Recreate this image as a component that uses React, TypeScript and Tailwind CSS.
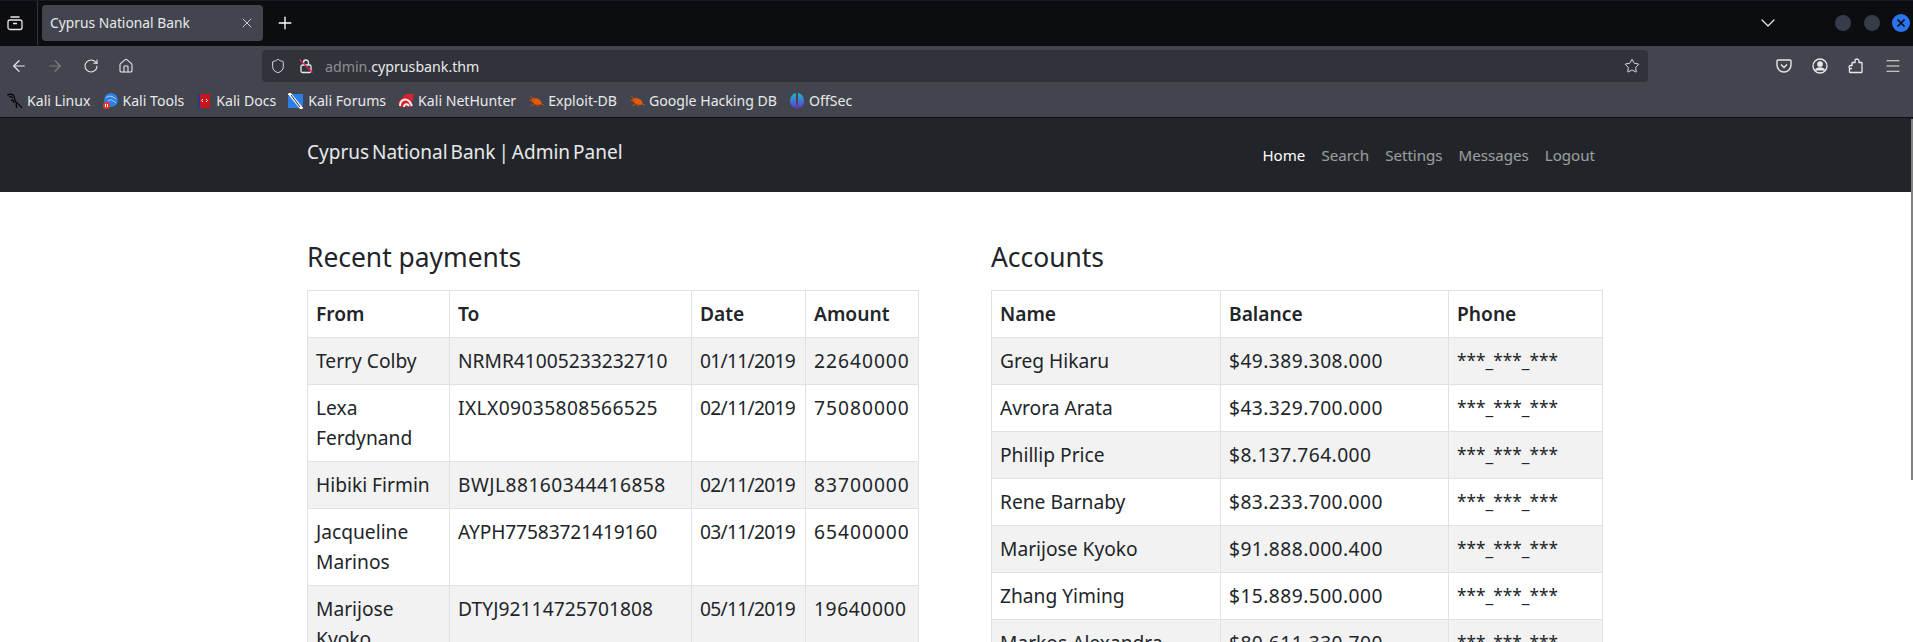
import { ArrowLeft, ArrowRight, ChevronDown, Home, Menu, Plus, RotateCw, Shield, Star, X } from 'lucide-react';

const bookmarks = [
    { name: 'Kali Linux', icon: 'linux' },
    { name: 'Kali Tools', icon: 'tools' },
    { name: 'Kali Docs', icon: 'docs' },
    { name: 'Kali Forums', icon: 'forums' },
    { name: 'Kali NetHunter', icon: 'nethunter' },
    { name: 'Exploit-DB', icon: 'bug' },
    { name: 'Google Hacking DB', icon: 'bug' },
    { name: 'OffSec', icon: 'offsec' },
];

// tracking 补偿字体数字宽度差异
const payments = [
    { from: 'Terry Colby', to: 'NRMR41005233232710', toClass: '', date: '01/11/2019', amount: '22640000', amountClass: 'tracking-[1px]' },
    { from: 'Lexa Ferdynand', to: 'IXLX09035808566525', toClass: 'tracking-[0.4px]', date: '02/11/2019', amount: '75080000', amountClass: 'tracking-[1px]' },
    { from: 'Hibiki Firmin', to: 'BWJL88160344416858', toClass: 'tracking-[0.47px]', date: '02/11/2019', amount: '83700000', amountClass: 'tracking-[1px]' },
    { from: 'Jacqueline Marinos', to: 'AYPH77583721419160', toClass: 'tracking-[-0.13px]', date: '03/11/2019', amount: '65400000', amountClass: 'tracking-[1px]' },
    { from: 'Marijose Kyoko', to: 'DTYJ92114725701808', toClass: 'tracking-[0.07px]', date: '05/11/2019', amount: '19640000', amountClass: 'tracking-[0.6px]' },
];

const accounts = [
    { name: 'Greg Hikaru', balance: '$49.389.308.000' },
    { name: 'Avrora Arata', balance: '$43.329.700.000' },
    { name: 'Phillip Price', balance: '$8.137.764.000' },
    { name: 'Rene Barnaby', balance: '$83.233.700.000' },
    { name: 'Marijose Kyoko', balance: '$91.888.000.400' },
    { name: 'Zhang Yiming', balance: '$15.889.500.000' },
    { name: 'Markos Alexandra', balance: '$80.611.330.700' },
];

function Favicon({ type }: { type: string }) {
    if (type === 'linux') {
        return (
            <svg viewBox="0 0 16 16" className="w-4 h-4" fill="none" stroke="#08080a" strokeWidth="1.3">
                <path d="M0 2c3-1 6-1 7 1 1 3 0 5 3 7 2 1 3 3 5 5" />
                <path d="M2 4c2-1 3 0 4 1M4 7c2 0 3 1 3 3M10 10c-1 1-1 3 0 5" />
            </svg>
        );
    }
    if (type === 'tools') {
        return (
            <svg viewBox="0 0 16 16" className="w-4 h-4">
                <circle cx="9" cy="7" r="7" fill="#2f7fe0" />
                <path d="M4 5c3-3 6-2 10 1M6 8c2-2 5-1 8 2" stroke="#bcd9f7" fill="none" />
                <rect x="1" y="9" width="7" height="7" rx="3" fill="#e5372c" />
                <path d="M3.5 11v3M5.5 11v3" stroke="#fff" />
            </svg>
        );
    }
    if (type === 'docs') {
        return (
            <svg viewBox="0 0 16 16" className="w-4 h-4">
                <rect x="2" y="1" width="12" height="14" fill="#c8141c" />
                <rect x="2" y="1" width="2" height="15" fill="#1d3f8f" />
                <path d="M7 6 5.5 7.5 7 9M10 6l1.5 1.5L10 9" stroke="#fff" fill="none" />
            </svg>
        );
    }
    if (type === 'forums') {
        return (
            <svg viewBox="0 0 16 16" className="w-4 h-4">
                <path d="M0 3 4 1h11v11l-2 3H0z" fill="#2b7fe6" />
                <path d="M1 0 14 16" stroke="#fff" strokeWidth="3" />
                <path d="M3 2 12 14" stroke="#1b2430" strokeWidth="1" />
            </svg>
        );
    }
    if (type === 'nethunter') {
        return (
            <svg viewBox="0 0 16 16" className="w-4 h-4">
                <path d="M0 9 8 1h8l-3 13H2z" fill="#d8232f" />
                <path d="M2 13c0-6 5-8 9-5 1 1 2 3 3 5M6 14c0-3 3-4 5-1" stroke="#f2f2f2" strokeWidth="1.9" fill="none" />
            </svg>
        );
    }
    if (type === 'bug') {
        return (
            <svg viewBox="0 0 16 16" className="w-4 h-4">
                <ellipse cx="8.5" cy="8.5" rx="5.5" ry="3" fill="#e8590c" transform="rotate(25 8.5 8.5)" />
                <path d="M2 3 7 7M1 7l5 2M3 13l4-2M9 14l1-3M13 11l3 1" stroke="#c9480a" />
            </svg>
        );
    }
    return (
        <svg viewBox="0 0 16 16" className="w-4 h-4">
            <defs>
                <linearGradient id="offsec" x1="0" y1="0" x2="0" y2="1">
                    <stop offset="0" stopColor="#1fb6c9" />
                    <stop offset="1" stopColor="#5a3fd8" />
                </linearGradient>
            </defs>
            <path d="M7 0C3 1 1 4 1 8s2 6 6 7z" fill="url(#offsec)" />
            <path d="M9 0c4 1 6 4 6 8s-2 6-6 7z" fill="url(#offsec)" />
            <path d="M8 10v6" stroke="#7a3fd0" />
        </svg>
    );
}

export default function App() {
    return (
        <div className="relative h-[642px] w-[1913px] overflow-hidden bg-white font-['Noto_Sans','Open_Sans',sans-serif]">
            {/* 标签栏 */}
            <div className="flex h-[46px] items-center border-t border-[#1a1b20] bg-[#0c0d11] pb-px">
                <div className="flex h-full w-[38px] items-center border-r border-[#33343a] pl-[7px]">
                    <svg viewBox="0 0 16 16" className="w-4 h-4" fill="none" stroke="#e8e8ea" strokeWidth="1.3">
                        <rect x="1" y="5" width="14" height="9.5" rx="2" />
                        <path d="M3.5 2h9M6 8.5h4" />
                    </svg>
                </div>
                <div className="ml-1 flex h-9 w-[221px] items-center justify-between rounded bg-[#42454d] pl-2 pr-2 text-[13.8px] text-[#e9e9ec]">
                    <span>Cyprus National Bank</span>
                    <X className="w-4 h-4 text-[#d0d0d4]" strokeWidth={1.5} />
                </div>
                <Plus className="ml-3 w-5 h-5 text-white" strokeWidth={1.6} />
                <div className="ml-auto flex items-center">
                    <ChevronDown className="mr-[55px] w-6 h-6 text-[#e8e8ea]" strokeWidth={1.3} />
                    <span className="mr-[13px] h-4 w-4 rounded-full bg-[#373c4a]" />
                    <span className="mr-[12px] h-4 w-4 rounded-full bg-[#373c4a]" />
                    <span className="mr-[3px] flex h-[18px] w-[18px] items-center justify-center rounded-full bg-[#2a75ee]">
                        <X className="w-3 h-3 text-[#0c0d11]" strokeWidth={3.5} />
                    </span>
                </div>
            </div>

            {/* 地址栏 */}
            <div className="flex h-[40px] items-center bg-[#42454d] pl-[10px] text-[#e9e9ec]">
                <ArrowLeft className="w-[18px] h-[18px]" strokeWidth={1.6} />
                <ArrowRight className="ml-[18px] w-[18px] h-[18px] text-[#7c7e85]" strokeWidth={1.6} />
                <RotateCw className="ml-[19px] w-4 h-4" strokeWidth={1.6} />
                <Home className="ml-[19px] w-4 h-4" strokeWidth={1.6} />
                <div className="ml-[128px] flex h-8 w-[1386px] items-center rounded bg-[#31333a] pl-2 pr-2">
                    <Shield className="w-4 h-4" strokeWidth={1.4} />
                    <svg viewBox="0 0 16 16" className="ml-3 w-4 h-4" fill="none" stroke="#e9e9ec" strokeWidth="1.3">
                        <rect x="3" y="7" width="10" height="7.5" rx="1.5" />
                        <path d="M5.5 7V4.5a2.5 2.5 0 0 1 5 0V7" />
                        <path d="M1.5 1.5 14.5 14.5" stroke="#e0245e" />
                    </svg>
                    <span className="ml-[11px] pt-px text-[14.2px]">
                        <span className="text-[#8c8e94]">admin.</span>cyprusbank.thm
                    </span>
                    <Star className="ml-auto w-4 h-4" strokeWidth={1.4} />
                </div>
                <div className="ml-[128px] flex items-center gap-[20px]">
                    <svg viewBox="0 0 16 16" className="w-4 h-4" fill="none" stroke="#e9e9ec" strokeWidth="1.4">
                        <path d="M2 2h12a1 1 0 0 1 1 1v4a7 7 0 0 1-14 0V3a1 1 0 0 1 1-1z" />
                        <path d="m5 6.5 3 3 3-3" />
                    </svg>
                    <svg viewBox="0 0 16 16" className="w-4 h-4" fill="none" stroke="#e9e9ec" strokeWidth="1.3">
                        <circle cx="8" cy="8" r="7" />
                        <circle cx="8" cy="6" r="2.2" fill="#e9e9ec" />
                        <path d="M3.5 12.5C4.5 10.5 6 10 8 10s3.5.5 4.5 2.5" fill="#e9e9ec" />
                    </svg>
                    <svg viewBox="0 0 16 16" className="w-4 h-4" fill="none" stroke="#e9e9ec" strokeWidth="1.3">
                        <path d="M2 14.5h11.5a.5.5 0 0 0 .5-.5V5a.5.5 0 0 0-.5-.5H11V3a2 2 0 0 0-4 0v1.5H4.5A.5.5 0 0 0 4 5v2.5H2.5v0a1.5 1.5 0 0 0 0 3H4v0H1.5V14a.5.5 0 0 0 .5.5z" />
                    </svg>
                    <Menu className="w-[18px] h-[18px]" strokeWidth={1.5} />
                </div>
            </div>

            {/* 书签栏 */}
            <div className="flex h-[32px] items-center gap-3 border-b border-[#0c0d11] bg-[#42454d] pb-[1px] pl-[7px] text-[14.1px] text-[#e9e9ec]">
                {bookmarks.map((b) => (
                    <div key={b.name} className="flex items-center gap-[4px]">
                        <Favicon type={b.icon} />
                        <span>{b.name}</span>
                    </div>
                ))}
            </div>

            {/* 导航栏 */}
            <div className="flex h-[74px] bg-[#212529] pl-[307px] pr-[318px]">
                <div className="pt-[19px] text-[19px] leading-[30px] text-white/90 [word-spacing:-2px]">Cyprus National Bank | Admin Panel</div>
                <div className="ml-auto flex gap-4 pt-[25px] text-[15.1px] leading-6 text-white/55">
                    <span className="text-white">Home</span>
                    <span>Search</span>
                    <span>Settings</span>
                    <span>Messages</span>
                    <span>Logout</span>
                </div>
            </div>

            {/* 表格 */}
            <div className="grid grid-cols-[611px_611px] gap-[73px] pl-[307px] pt-[49px] text-[19.2px] leading-[30px] text-[#212529]">
                <div>
                    <h2 className="mb-[17px] text-[26.4px] leading-[32px]">Recent payments</h2>
                    <table className="w-full table-fixed border-collapse">
                        <colgroup>
                            <col className="w-[142px]" />
                            <col className="w-[242px]" />
                            <col className="w-[114px]" />
                            <col className="w-[113px]" />
                        </colgroup>
                        <thead>
                            <tr>
                                {['From', 'To', 'Date', 'Amount'].map((h) => (
                                    <th key={h} className="border border-[#dee2e6] px-2 py-2 text-left font-semibold">{h}</th>
                                ))}
                            </tr>
                        </thead>
                        <tbody>
                            {payments.map((p, i) => (
                                <tr key={p.to} className={i % 2 === 0 ? 'bg-[#f2f2f2]' : ''}>
                                    <td className="border border-[#dee2e6] px-2 py-2 align-top">{p.from}</td>
                                    <td className={`border border-[#dee2e6] px-2 py-2 align-top ${p.toClass}`}>{p.to}</td>
                                    <td className="border border-[#dee2e6] px-2 py-2 align-top tracking-[-0.7px] whitespace-nowrap">{p.date}</td>
                                    <td className={`border border-[#dee2e6] px-2 py-2 align-top whitespace-nowrap ${p.amountClass}`}>{p.amount}</td>
                                </tr>
                            ))}
                        </tbody>
                    </table>
                </div>
                <div>
                    <h2 className="mb-[17px] text-[26.4px] leading-[32px]">Accounts</h2>
                    <table className="w-full table-fixed border-collapse">
                        <colgroup>
                            <col className="w-[229px]" />
                            <col className="w-[228px]" />
                            <col className="w-[154px]" />
                        </colgroup>
                        <thead>
                            <tr>
                                {['Name', 'Balance', 'Phone'].map((h) => (
                                    <th key={h} className="border border-[#dee2e6] px-2 py-2 text-left font-semibold">{h}</th>
                                ))}
                            </tr>
                        </thead>
                        <tbody>
                            {accounts.map((a, i) => (
                                <tr key={a.name} className={i % 2 === 0 ? 'bg-[#f2f2f2]' : ''}>
                                    <td className="border border-[#dee2e6] px-2 py-2">{a.name}</td>
                                    <td className="border border-[#dee2e6] px-2 py-2 tracking-[0.45px]">{a.balance}</td>
                                    <td className="border border-[#dee2e6] px-2 py-2 text-[17.3px]">***_***_***</td>
                                </tr>
                            ))}
                        </tbody>
                    </table>
                </div>
            </div>

            {/* 滚动条 */}
            <div className="absolute right-0 top-[119px] h-[361px] w-[2px] bg-[#808483]" />
        </div>
    );
}
